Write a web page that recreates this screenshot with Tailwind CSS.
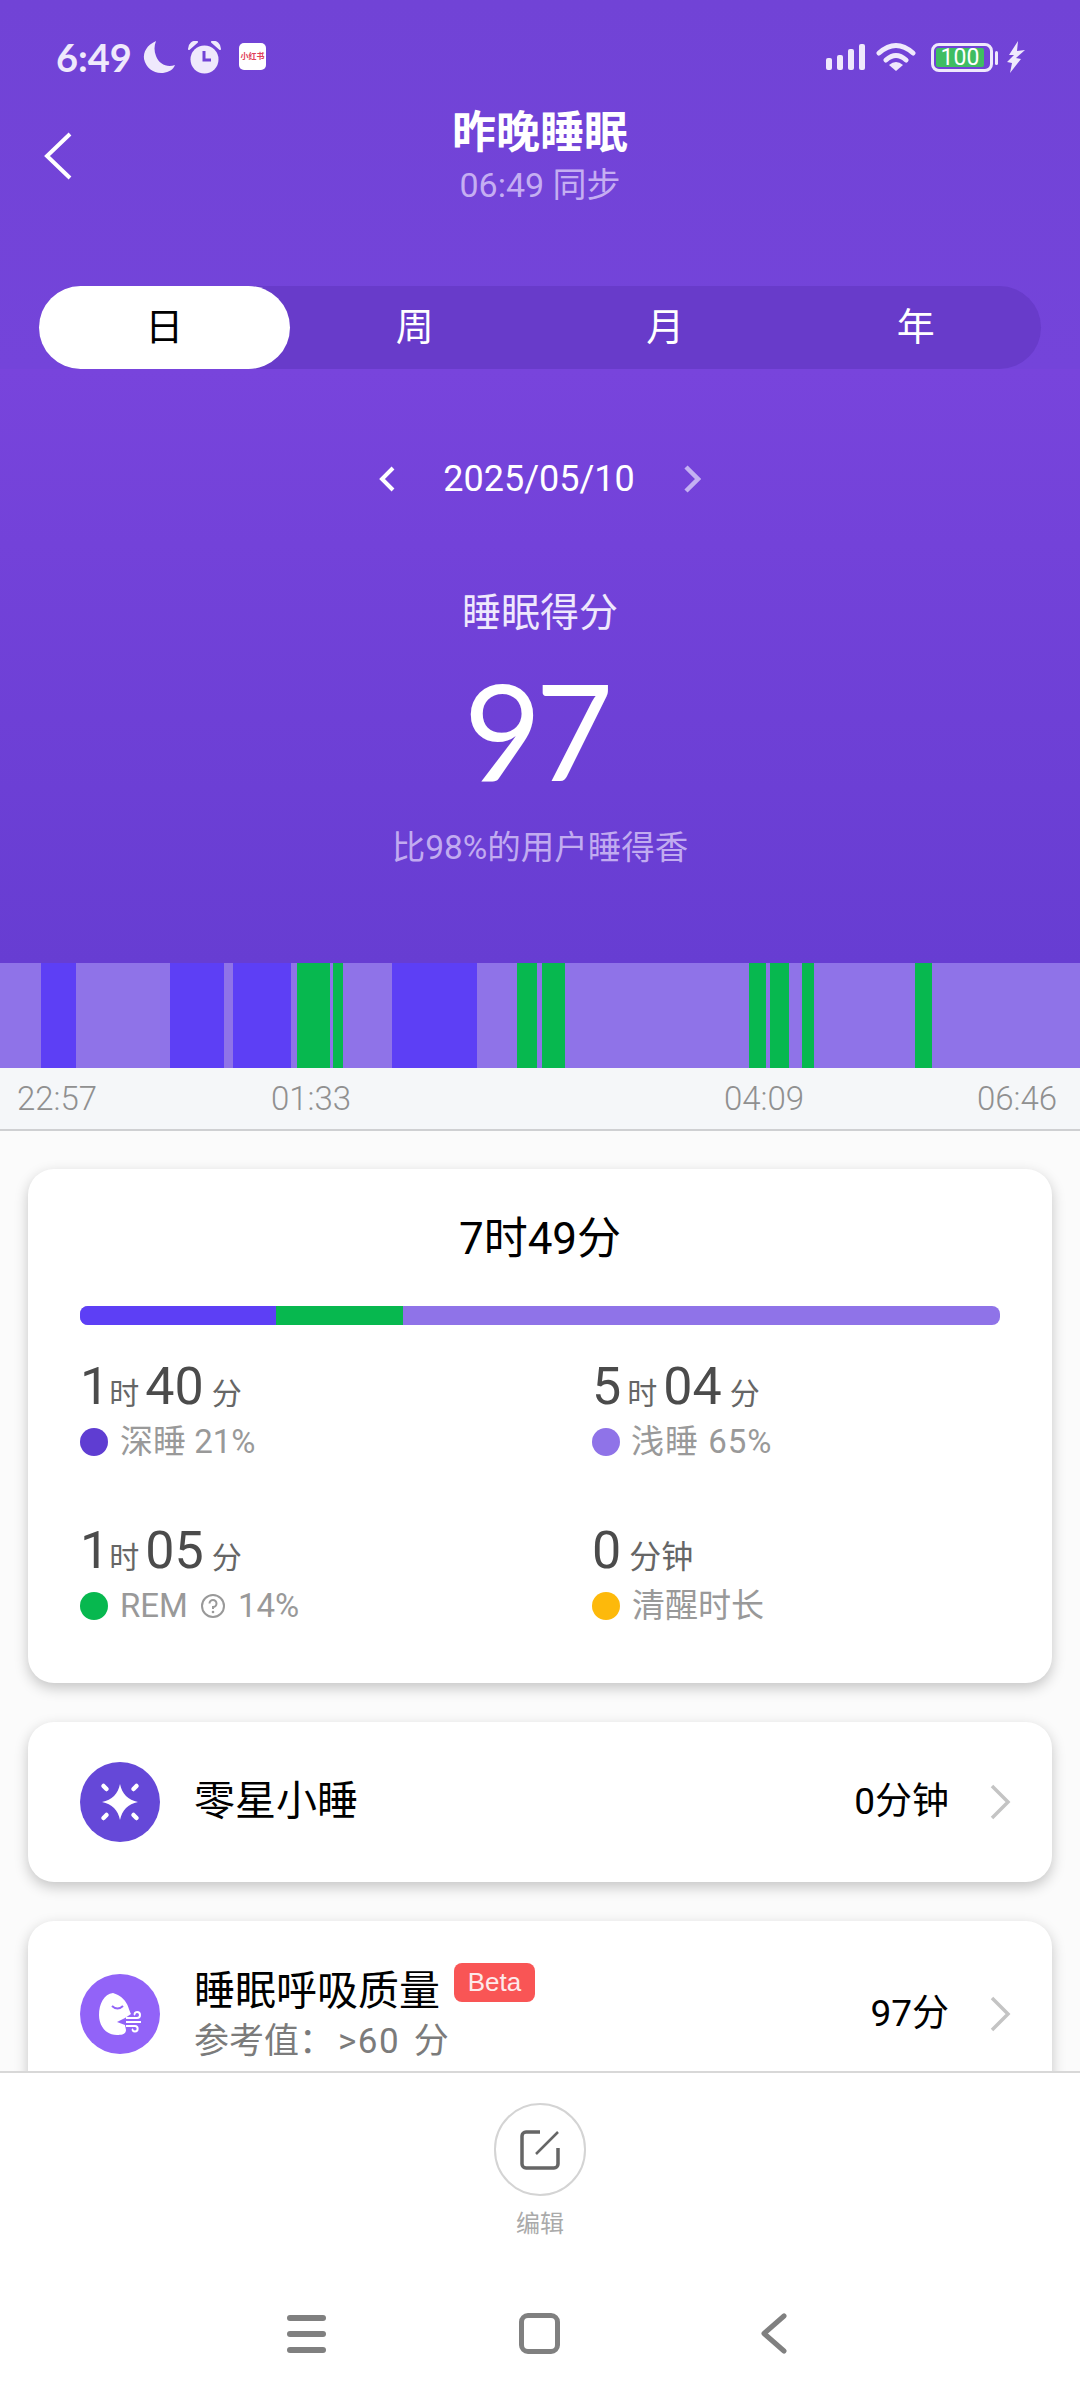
<!DOCTYPE html>
<html lang="zh-CN">
<head>
    <meta charset="UTF-8">
    <title>昨晚睡眠</title>
    <script src="https://cdn.jsdelivr.net/npm/@tailwindcss/browser@4"></script>
</head>
<body class="bg-white">
<div class="w-[1080px] h-[2400px] flex flex-col overflow-hidden font-['Roboto','Noto_Sans_CJK_SC',sans-serif]">

    <!-- purple header -->
    <div class="h-[369px] bg-gradient-to-b from-[#7143d6] to-[#7444da] shrink-0">
        <div class="h-[75px] pt-[41px] pl-[56px] pr-[55px] flex items-start text-[#efe9fc]">
            <span class="w-[78px] h-[32px] text-[38px] leading-[32px] font-['Lato','Roboto',sans-serif] font-bold">6:49</span>
            <svg class="ml-[9px] w-[33px] h-[33px]" viewBox="0 0 33 33"><path d="M13 0 C4 4 0 11 1 18 C3 27 11 33 20 32 C26 31 30 29 32 24 C24 27 16 23 13 15 C11 10 11 5 13 0Z" fill="currentColor"/></svg>
            <svg class="ml-[11px] w-[35px] h-[33px]" viewBox="0 0 35 33"><circle cx="17.5" cy="18.500" r="14" fill="currentColor"/><path d="M2 8 C2 3 6 0 10 1 Z M33 8 C33 3 29 0 25 1 Z" fill="currentColor" stroke="currentColor" stroke-width="2" stroke-linejoin="round"/><path d="M17 10 V19 H24" fill="none" stroke="#7143d6" stroke-width="3"/></svg>
            <div class="ml-[17px] mt-[2px] w-[27px] h-[27px] bg-white rounded-[5px] flex items-center justify-center text-[8px] leading-none text-[#e0405a] font-bold whitespace-nowrap">小红书</div>
            <div class="ml-auto h-[26px] mt-[3px] flex items-end gap-[5px]">
                <div class="w-[6px] h-[12px] rounded-[2px] bg-current"></div>
                <div class="w-[6px] h-[15px] rounded-[2px] bg-current"></div>
                <div class="w-[6px] h-[21px] rounded-[2px] bg-current"></div>
                <div class="w-[6px] h-[26px] rounded-[2px] bg-current"></div>
            </div>
            <svg class="ml-[11px] mt-[1px] w-[40px] h-[29px]" viewBox="0 0 40 29"><path d="M3 11 Q20 -4 37 11 M10 18 Q20 9 30 18" fill="none" stroke="currentColor" stroke-width="5" stroke-linecap="round"/><path d="M13 23 Q20 17 27 23 L20 29Z" fill="currentColor"/></svg>
            <div class="ml-[15px] mt-[2px] w-[62px] h-[29px] border-[3px] border-current rounded-[8px] p-[2px]">
                <div class="w-[48px] h-full bg-[#3fbd62] rounded-[2px] flex items-center justify-center text-[23px] leading-none text-white">100</div>
            </div>
            <div class="ml-[2px] mt-[10px] w-[3px] h-[14px] rounded-[2px] bg-current"></div>
            <svg class="ml-[9px] w-[18px] h-[32px]" viewBox="0 0 18 32"><path d="M11 0 L2 14 L7 14 L0 21 L5 22 L3 32 L14 18 L9 17 L18 9 L10 10Z" fill="currentColor"/></svg>
        </div>

        <div class="mt-[28px] h-[104px] grid grid-cols-[1fr_auto_1fr]">
            <svg class="ml-[44px] mt-[29px] w-[28px] h-[48px]" viewBox="0 0 28 48"><path d="M26 2 L3 24 L26 46" fill="none" stroke="white" stroke-width="4"/></svg>
            <div class="text-center">
                <div class="h-[60px] text-[44px] leading-[60px] font-bold text-white">昨晚睡眠</div>
                <div class="h-[44px] text-[34px] leading-[44px] text-[#c5aef2]">06:49 同步</div>
            </div>
        </div>

        <div class="mt-[79px] mx-[39px] h-[83px] rounded-[42px] bg-[#683bca] grid grid-cols-4 text-[38px] leading-[83px] text-center text-white">
            <div class="bg-white text-black rounded-[42px]">日</div>
            <div>周</div>
            <div>月</div>
            <div>年</div>
        </div>
    </div>

    <!-- score -->
    <div class="h-[594px] shrink-0 bg-gradient-to-b from-[#7844dc] to-[#673dd2] text-center pt-[85px]">
        <div class="h-[50px] flex items-center justify-center">
            <svg class="w-[16px] h-[26px]" viewBox="0 0 16 26"><path d="M14 2 L3 13 L14 24" fill="none" stroke="white" stroke-width="4"/></svg>
            <span class="mx-[48px] text-[36px] leading-[50px] text-white">2025/05/10</span>
            <svg class="w-[18px] h-[28px]" viewBox="0 0 18 28"><path d="M3 2 L15 14 L3 26" fill="none" stroke="#c4b1f2" stroke-width="4.500"/></svg>
        </div>
        <div class="mt-[84px] h-[50px] text-[39px] leading-[50px] text-[#efe8fd]">睡眠得分</div>
        <div class="mt-[17px] h-[150px] pr-[9px] text-[134px] leading-[150px] tracking-[-6px] font-['Lato','Roboto',sans-serif] text-white">97</div>
        <div class="mt-[21px] h-[44px] text-[33.500px] leading-[44px] text-[#c1abf0]">比98%的用户睡得香</div>
    </div>

    <!-- stages chart -->
    <div id="stages" class="h-[105px] shrink-0 flex bg-[#8f73e8]"></div>
    <div class="h-[63px] shrink-0 bg-[#f5f7f9] border-b-2 border-[#cfd0d2] flex items-center text-[33px] text-[#909090] font-light">
        <span class="ml-[17px] w-[254px]">22:57</span>
        <span class="w-[453px]">01:33</span>
        <span class="w-[253px]">04:09</span>
        <span>06:46</span>
    </div>

    <!-- scroll area -->
    <div class="h-[940px] shrink-0 overflow-hidden bg-[#fbfbfb] px-[28px] pt-[38px]">
        <div class="h-[514px] rounded-[26px] bg-white shadow-[0_5px_14px_rgba(0,0,0,0.22)] px-[52px] pt-[40px]">
            <div class="h-[60px] text-[44px] leading-[60px] text-center text-black">7时49分</div>
            <div class="mt-[37px] h-[19px] rounded-[8px] overflow-hidden flex bg-[#8f73e8]">
                <div class="w-[196px] bg-[#5d3ff5]"></div>
                <div class="w-[127px] bg-[#07b84f]"></div>
            </div>
            <div class="mt-[32px] grid grid-cols-[512px_1fr] gap-y-[65px] text-[#4b4b4b]">
                <div>
                    <div class="h-[60px] leading-[60px] text-[52px]">1<span class="mr-[6px] text-[30px] text-[#666]">时</span>40<span class="ml-[8px] text-[30px] text-[#666]">分</span></div>
                    <div class="mt-[11px] h-[28px] flex items-center text-[33px] text-[#999]"><span class="w-[28px] h-[28px] rounded-full bg-[#5f3dd2] mr-[12px]"></span>深睡 21%</div>
                </div>
                <div>
                    <div class="h-[60px] leading-[60px] text-[52px]">5<span class="mx-[6px] text-[30px] text-[#666]">时</span>04<span class="ml-[8px] text-[30px] text-[#666]">分</span></div>
                    <div class="mt-[11px] h-[28px] flex items-center text-[33px] text-[#999] tracking-[1px]"><span class="w-[28px] h-[28px] rounded-full bg-[#8f73e8] mr-[11px]"></span>浅睡 65%</div>
                </div>
                <div>
                    <div class="h-[60px] leading-[60px] text-[52px]">1<span class="mr-[6px] text-[30px] text-[#666]">时</span>05<span class="ml-[8px] text-[30px] text-[#666]">分</span></div>
                    <div class="mt-[11px] h-[28px] flex items-center text-[33px] text-[#999]">
                        <span class="w-[28px] h-[28px] rounded-full bg-[#07b84f] mr-[12px]"></span>REM
                        <svg class="mx-[12px] w-[26px] h-[26px]" viewBox="0 0 26 26"><circle cx="13" cy="13" r="11" fill="none" stroke="#999" stroke-width="2"/><path d="M9.500 10.500 A3.500 3.500 0 1 1 13 14 V16" fill="none" stroke="#999" stroke-width="2"/><circle cx="13" cy="19" r="1.300" fill="#999"/></svg>14%
                    </div>
                </div>
                <div>
                    <div class="h-[60px] leading-[60px] text-[52px]">0<span class="ml-[8px] text-[32px] text-[#666]">分钟</span></div>
                    <div class="mt-[11px] h-[28px] flex items-center text-[33px] text-[#999]"><span class="w-[28px] h-[28px] rounded-full bg-[#fdb90b] mr-[12px]"></span>清醒时长</div>
                </div>
            </div>
        </div>

        <div class="mt-[39px] h-[160px] rounded-[26px] bg-white shadow-[0_5px_14px_rgba(0,0,0,0.22)] pl-[52px] pr-[41px] flex items-center">
            <svg class="w-[80px] h-[80px]" viewBox="0 0 80 80">
                <circle cx="40" cy="40" r="40" fill="#6548d8"/>
                <path d="M40 22 C42 32 48 38 58 40 C48 42 42 48 40 58 C38 48 32 42 22 40 C32 38 38 32 40 22Z" fill="white"/>
                <path d="M23.500 24 L26.500 27 M56.500 24 L53.500 27 M23.500 56 L26.500 53 M56.500 56 L53.500 53" stroke="white" stroke-width="4.500" stroke-linecap="round"/>
            </svg>
            <span class="ml-[34px] text-[41px] text-black">零星小睡</span>
            <span class="ml-auto text-[37px] text-black">0分钟</span>
            <svg class="ml-[40px] w-[22px] h-[36px]" viewBox="0 0 22 36"><path d="M3 2 L19 18 L3 34" fill="none" stroke="#c4c4c4" stroke-width="3.500"/></svg>
        </div>

        <div class="mt-[39px] h-[186px] rounded-[26px] bg-white shadow-[0_5px_14px_rgba(0,0,0,0.22)] pl-[52px] pr-[41px] flex items-center">
            <svg class="w-[80px] h-[80px]" viewBox="0 0 80 80">
                <circle cx="40" cy="40" r="40" fill="#9263f8"/>
                <path d="M33 19 C24 20 19 30 19 41 C19 52 26 61 37 61 C42 61 46 60 46 56 L45 51 L37 48 L45 44 L51 40 C48 34 48 24 33 19Z" fill="white"/>
                <path d="M32 32 Q37.500 37 43 32" fill="none" stroke="#9263f8" stroke-width="2"/>
                <path d="M46 44 H57 C61 44 61 38 57 38 C55 38 54 40 55 41 M46 48 H61 M46 52 H55 C58.500 52 58.500 57.500 55 57.500 C53 57.500 52 56 53 55" fill="none" stroke="white" stroke-width="2"/>
            </svg>
            <div class="ml-[34px] mt-[2px]">
                <div class="h-[53px] flex items-start">
                    <span class="text-[41px] leading-[55px] text-black">睡眠呼吸质量</span>
                    <span class="ml-[14px] -mt-[1px] w-[81px] h-[39px] rounded-[8px] bg-[#f95555] text-[26px] leading-[39px] text-center text-[#fdeaea] font-['Liberation_Sans',sans-serif]">Beta</span>
                </div>
                <div class="text-[35px] leading-[50px] text-[#7b7b7b]">参考值：<span class="ml-[4px] tracking-[1.500px]">&gt;60</span> <span class="ml-[5px]">分</span></div>
            </div>
            <span class="ml-auto text-[37px] text-black">97分</span>
            <svg class="ml-[40px] w-[22px] h-[36px]" viewBox="0 0 22 36"><path d="M3 2 L19 18 L3 34" fill="none" stroke="#c4c4c4" stroke-width="3.500"/></svg>
        </div>
    </div>

    <!-- footer -->
    <div class="flex-1 bg-white border-t-2 border-[#d8d8d8] flex flex-col items-center pt-[30px]">
        <div class="w-[92px] h-[93px] rounded-full border-2 border-[#d4d4d4] flex items-center justify-center">
            <svg class="w-[40px] h-[40px]" viewBox="0 0 40 40"><path d="M20 2 H6 A4 4 0 0 0 2 6 V34 A4 4 0 0 0 6 38 H34 A4 4 0 0 0 38 34 V18" fill="none" stroke="#666" stroke-width="3.500"/><path d="M38 2 L16 24" stroke="#666" stroke-width="2.500"/></svg>
        </div>
        <div class="mt-[10px] text-[24px] leading-[36px] text-[#aaaaaa]">编辑</div>
        <div class="mt-[71px] self-start flex items-center">
            <div class="ml-[287px] w-[39px] flex flex-col gap-[10px]">
                <div class="h-[6px] rounded-[3px] bg-[#808080]"></div>
                <div class="h-[6px] rounded-[3px] bg-[#808080]"></div>
                <div class="h-[6px] rounded-[3px] bg-[#808080]"></div>
            </div>
            <div class="ml-[193px] w-[41px] h-[41px] rounded-[9px] border-[5px] border-[#808080]"></div>
            <svg class="ml-[200px] w-[27px] h-[41px]" viewBox="0 0 27 41"><path d="M24 3 L4 20.500 L24 38" fill="none" stroke="#808080" stroke-width="5" stroke-linecap="round" stroke-linejoin="round"/></svg>
        </div>
    </div>
</div>

<script>
    // [type, width] from left to right of the night
    const stages = [
        ['l', 41], ['d', 35], ['l', 94], ['d', 54], ['l', 9], ['d', 58], ['l', 6], ['r', 33], ['l', 3], ['r', 10],
        ['l', 49], ['d', 85], ['l', 40], ['r', 20], ['l', 5], ['r', 23], ['l', 184], ['r', 17], ['l', 4], ['r', 19],
        ['l', 13], ['r', 12], ['l', 101], ['r', 17], ['l', 148]
    ];
    const stageClass = { l: 'bg-[#8f73e8]', d: 'bg-[#5d3ff5]', r: 'bg-[#07b84f]' };
    document.getElementById('stages').innerHTML = stages
        .map(([type, w]) => `<div class="${stageClass[type]}" style="width:${w}px"></div>`)
        .join('');
</script>
</body>
</html>
